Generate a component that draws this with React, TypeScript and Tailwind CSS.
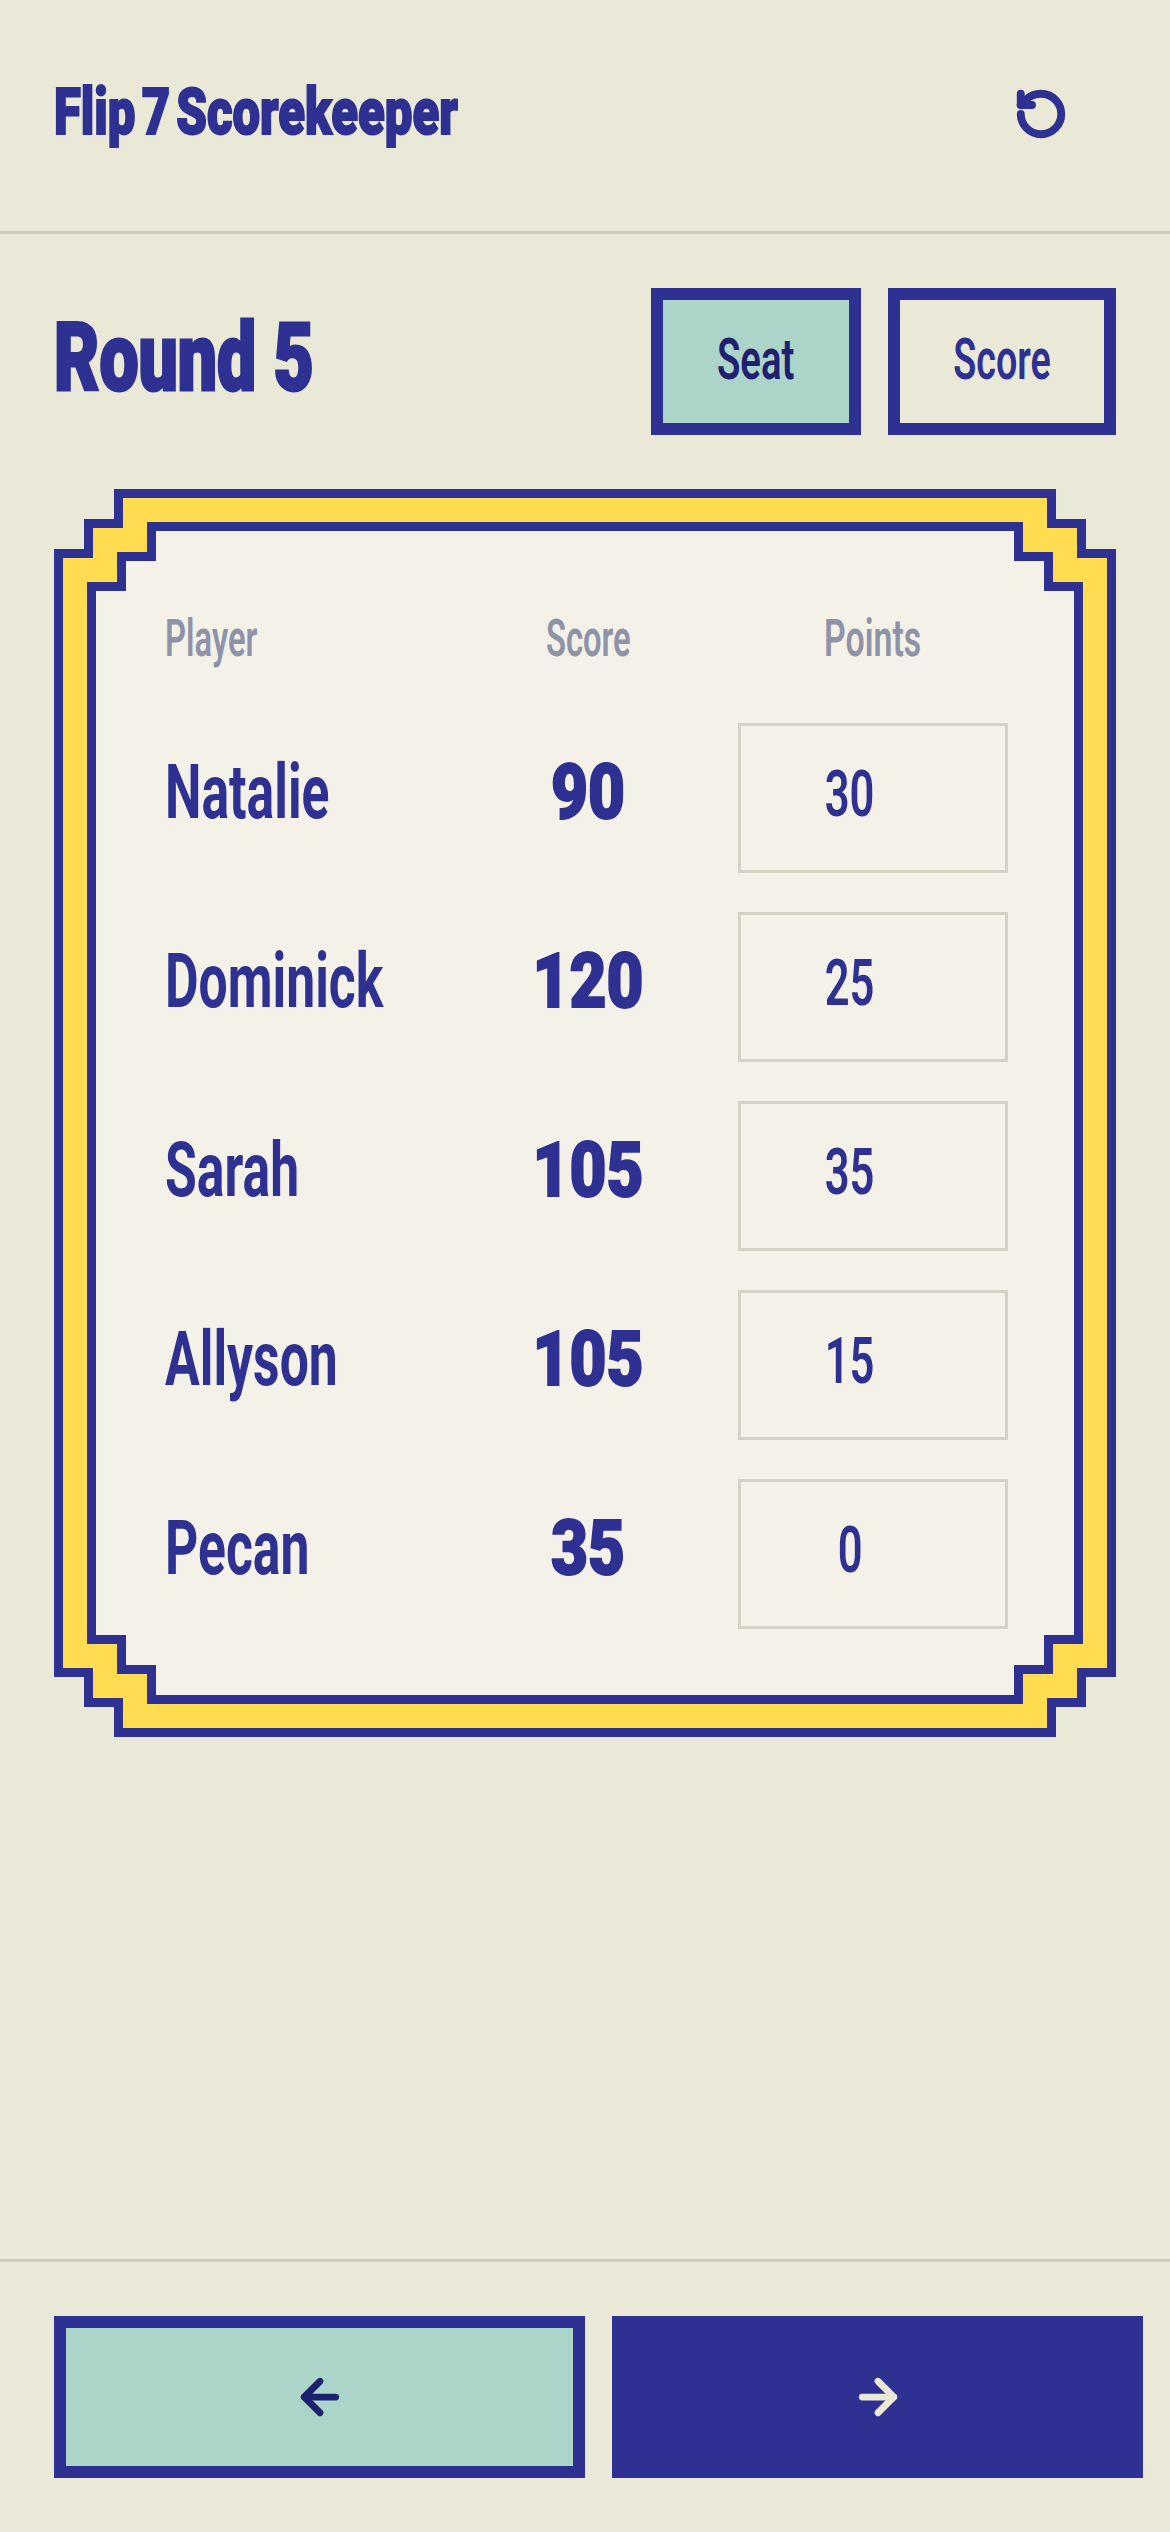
import { ArrowLeft, ArrowRight, RotateCcw } from "lucide-react";

type Player = { name: string; score: number; points: number };

const players: Player[] = [
  { name: "Natalie", score: 90, points: 30 },
  { name: "Dominick", score: 120, points: 25 },
  { name: "Sarah", score: 105, points: 35 },
  { name: "Allyson", score: 105, points: 15 },
  { name: "Pecan", score: 35, points: 0 },
];

const stepped =
  "[clip-path:polygon(60px_0,calc(100%-60px)_0,calc(100%-60px)_30px,calc(100%-30px)_30px,calc(100%-30px)_60px,100%_60px,100%_calc(100%-60px),calc(100%-30px)_calc(100%-60px),calc(100%-30px)_calc(100%-30px),calc(100%-60px)_calc(100%-30px),calc(100%-60px)_100%,60px_100%,60px_calc(100%-30px),30px_calc(100%-30px),30px_calc(100%-60px),0_calc(100%-60px),0_60px,30px_60px,30px_30px,60px_30px)]";

export default function App() {
  return (
    <div className="h-[2532px] w-[1170px] flex flex-col overflow-hidden bg-[#eae9d8] text-[#2e3192] [font-family:Roboto,sans-serif]">
      <header className="h-[234px] shrink-0 flex items-center justify-between border-b-[3px] border-[#cfccbc] px-[54px] pb-[6px]">
        <h1 className="inline-block origin-left scale-x-[0.755] whitespace-nowrap text-[65px] leading-none font-black [word-spacing:-8px] [-webkit-text-stroke:2px_#2e3192]">
          Flip 7 Scorekeeper
        </h1>
        <button type="button" className="w-[150px] h-[150px] pt-[3px] flex items-center justify-center">
          <RotateCcw size={54} strokeWidth={3.5} />
        </button>
      </header>

      <main className="flex-1 px-[54px] pt-[54px]">
        <div className="flex items-center justify-between">
          <h2 className="inline-block origin-left scale-x-[0.74] whitespace-nowrap text-[94px] leading-none font-black pb-[8px] [-webkit-text-stroke:3px_#2e3192]">
            Round 5
          </h2>
          <div className="flex gap-[27px]">
            <button
              type="button"
              className="w-[210px] h-[147px] flex items-center justify-center border-[12px] border-[#2e3192] bg-[#abd5c8] text-[#1f2070] pb-[6px]"
            >
              <span className="inline-block scale-x-[0.66] text-[58px] leading-none font-semibold">Seat</span>
            </button>
            <button
              type="button"
              className="w-[228px] h-[147px] flex items-center justify-center border-[12px] border-[#2e3192] pb-[6px]"
            >
              <span className="inline-block scale-x-[0.65] text-[58px] leading-none font-semibold">Score</span>
            </button>
          </div>
        </div>

        <div className={`mt-[54px] bg-[#2e3192] p-[9px] ${stepped}`}>
          <div className={`bg-[#ffdc50] p-[24px] ${stepped}`}>
            <div className={`bg-[#2e3192] p-[9px] ${stepped}`}>
              <div className={`bg-[#f4f2e8] p-[66px] ${stepped}`}>
                <div className="grid grid-cols-[minmax(0,1fr)_230px_270px] gap-x-[36px] h-[87px] pt-[16px] text-[52px] leading-none font-semibold text-[#8f93a8]">
                  <div className="pl-[3px]">
                    <span className="inline-block origin-left scale-x-[0.63]">Player</span>
                  </div>
                  <div className="text-center pl-[2px]">
                    <span className="inline-block scale-x-[0.63]">Score</span>
                  </div>
                  <div className="text-center">
                    <span className="inline-block scale-x-[0.65]">Points</span>
                  </div>
                </div>
                <div className="flex flex-col gap-[39px] mt-[39px]">
                  {players.map((player) => (
                    <div
                      key={player.name}
                      className="grid grid-cols-[minmax(0,1fr)_230px_270px] gap-x-[36px] items-center h-[150px]"
                    >
                      <div className="text-[76px] leading-none font-bold pb-[12px] pl-[3px] whitespace-nowrap">
                        <span className="inline-block origin-left scale-x-[0.68]">{player.name}</span>
                      </div>
                      <div className="text-center text-[76px] leading-none font-black pb-[12px] pl-[3px]">
                        <span className="inline-block scale-x-[0.84] [-webkit-text-stroke:2px_#2e3192]">
                          {player.score}
                        </span>
                      </div>
                      <div className="h-[150px] flex items-center justify-center border-[3px] border-[#d4d2c4] pr-[46px] pb-[6px] text-[64px] leading-none font-semibold">
                        <span className="inline-block scale-x-[0.68]">{player.points}</span>
                      </div>
                    </div>
                  ))}
                </div>
              </div>
            </div>
          </div>
        </div>
      </main>

      <footer className="h-[273px] shrink-0 flex gap-[27px] border-t-[3px] border-[#cfccbc] pl-[54px] pr-[27px] pt-[54px]">
        <button
          type="button"
          className="w-[531px] h-[162px] flex items-center justify-center border-[12px] border-[#2e3192] bg-[#abd5c8] text-[#1f2070]"
        >
          <ArrowLeft size={54} strokeWidth={3} />
        </button>
        <button
          type="button"
          className="w-[531px] h-[162px] flex items-center justify-center bg-[#2e3192] text-[#eae9d8]"
        >
          <ArrowRight size={54} strokeWidth={3} />
        </button>
      </footer>
    </div>
  );
}
